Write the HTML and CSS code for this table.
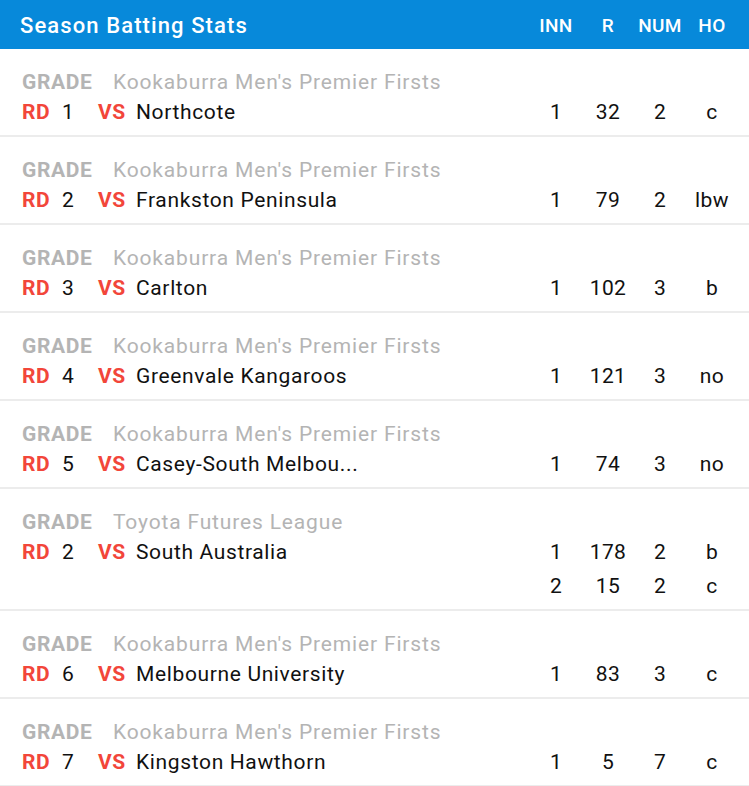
FILE: index.html
```html
<!DOCTYPE html>
<html>
<head>
<meta charset="utf-8">
<link rel="stylesheet" href="styles.css">
</head>
<body>
<div class="card">
  <div class="header">
    <div class="title">Season Batting Stats</div>
    <div class="stats head-stats">
      <span>INN</span><span>R</span><span>NUM</span><span>HO</span>
    </div>
  </div>

  <div class="row">
    <div class="grade"><span class="glabel">GRADE</span><span class="gname">Kookaburra Men's Premier Firsts</span></div>
    <div class="main">
      <div class="match"><span class="rd">RD</span><span class="num">1</span><span class="vs">VS</span><span class="team">Northcote</span></div>
      <div class="stats-block"><div class="stats"><span>1</span><span>32</span><span>2</span><span>c</span></div></div>
    </div>
  </div>

  <div class="row">
    <div class="grade"><span class="glabel">GRADE</span><span class="gname">Kookaburra Men's Premier Firsts</span></div>
    <div class="main">
      <div class="match"><span class="rd">RD</span><span class="num">2</span><span class="vs">VS</span><span class="team">Frankston Peninsula</span></div>
      <div class="stats-block"><div class="stats"><span>1</span><span>79</span><span>2</span><span>lbw</span></div></div>
    </div>
  </div>

  <div class="row">
    <div class="grade"><span class="glabel">GRADE</span><span class="gname">Kookaburra Men's Premier Firsts</span></div>
    <div class="main">
      <div class="match"><span class="rd">RD</span><span class="num">3</span><span class="vs">VS</span><span class="team">Carlton</span></div>
      <div class="stats-block"><div class="stats"><span>1</span><span>102</span><span>3</span><span>b</span></div></div>
    </div>
  </div>

  <div class="row">
    <div class="grade"><span class="glabel">GRADE</span><span class="gname">Kookaburra Men's Premier Firsts</span></div>
    <div class="main">
      <div class="match"><span class="rd">RD</span><span class="num">4</span><span class="vs">VS</span><span class="team">Greenvale Kangaroos</span></div>
      <div class="stats-block"><div class="stats"><span>1</span><span>121</span><span>3</span><span>no</span></div></div>
    </div>
  </div>

  <div class="row">
    <div class="grade"><span class="glabel">GRADE</span><span class="gname">Kookaburra Men's Premier Firsts</span></div>
    <div class="main">
      <div class="match"><span class="rd">RD</span><span class="num">5</span><span class="vs">VS</span><span class="team">Casey-South Melbou...</span></div>
      <div class="stats-block"><div class="stats"><span>1</span><span>74</span><span>3</span><span>no</span></div></div>
    </div>
  </div>

  <div class="row">
    <div class="grade"><span class="glabel">GRADE</span><span class="gname">Toyota Futures League</span></div>
    <div class="main">
      <div class="match"><span class="rd">RD</span><span class="num">2</span><span class="vs">VS</span><span class="team">South Australia</span></div>
      <div class="stats-block">
        <div class="stats"><span>1</span><span>178</span><span>2</span><span>b</span></div>
        <div class="stats"><span>2</span><span>15</span><span>2</span><span>c</span></div>
      </div>
    </div>
  </div>

  <div class="row">
    <div class="grade"><span class="glabel">GRADE</span><span class="gname">Kookaburra Men's Premier Firsts</span></div>
    <div class="main">
      <div class="match"><span class="rd">RD</span><span class="num">6</span><span class="vs">VS</span><span class="team">Melbourne University</span></div>
      <div class="stats-block"><div class="stats"><span>1</span><span>83</span><span>3</span><span>c</span></div></div>
    </div>
  </div>

  <div class="row">
    <div class="grade"><span class="glabel">GRADE</span><span class="gname">Kookaburra Men's Premier Firsts</span></div>
    <div class="main">
      <div class="match"><span class="rd">RD</span><span class="num">7</span><span class="vs">VS</span><span class="team">Kingston Hawthorn</span></div>
      <div class="stats-block"><div class="stats"><span>1</span><span>5</span><span>7</span><span>c</span></div></div>
    </div>
  </div>
</div>
</body>
</html>
```

FILE: styles.css
```css
* { box-sizing: border-box; }
html, body { margin: 0; padding: 0; background: #ffffff; }
body {
  font-family: Roboto, "Noto Sans", sans-serif;
  color: #111111;
  width: 749px;
  overflow: hidden;
  letter-spacing: 0.04em;
}
.header {
  height: 49px;
  background: #0789da;
  color: #ffffff;
  display: flex;
  align-items: center;
  justify-content: space-between;
  padding: 1px 11px 0 20px;
}
.title {
  font-size: 22px;
  font-weight: 500;
  letter-spacing: 0.05em;
}
.stats {
  display: grid;
  grid-template-columns: repeat(4, 52px);
  height: 34px;
  align-items: center;
  font-size: 21px;
  font-weight: 400;
  letter-spacing: 0.02em;
}
.stats span { text-align: center; }
.head-stats {
  font-size: 19px;
  font-weight: 500;
}
.row {
  padding: 20px 11px 6px 22px;
  border-bottom: 2px solid #ececec;
}
.grade {
  height: 26px;
  display: flex;
  align-items: center;
  font-size: 21px;
  color: #b4b4b4;
}
.glabel { font-weight: 700; width: 91px; }
.gname { font-weight: 400; letter-spacing: 0.04em; }
.main {
  display: flex;
  justify-content: space-between;
  align-items: flex-start;
}
.match {
  height: 34px;
  display: flex;
  align-items: center;
  font-size: 21px;
  font-weight: 400;
}
.rd { color: #f2463a; font-weight: 700; width: 40px; }
.num { width: 36px; }
.vs { color: #f2463a; font-weight: 700; width: 38px; }
```
